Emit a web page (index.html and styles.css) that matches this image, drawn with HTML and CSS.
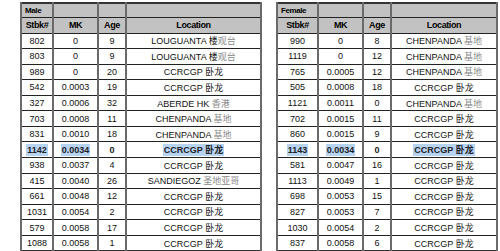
FILE: index.html
```html
<!DOCTYPE html>
<html lang="en">
<head>
    <meta charset="UTF-8">
    <title>Studbook MK</title>
    <link rel="stylesheet" href="styles.css">
</head>
<body>
    <div class="page">
        <table class="mk-table left">
            <colgroup>
                <col class="c-stbk-l"><col class="c-mk"><col class="c-age"><col>
            </colgroup>
            <tr class="group-row"><th class="group">Male</th><th></th><th></th><th></th></tr>
            <tr class="head-row"><th>Stbk#</th><th>MK</th><th>Age</th><th>Location</th></tr>
            <tr><td>802</td><td>0</td><td>9</td><td>LOUGUANTA 楼<span class="zh">观台</span></td></tr>
            <tr><td>803</td><td>0</td><td>9</td><td>LOUGUANTA 楼<span class="zh">观台</span></td></tr>
            <tr><td>989</td><td>0</td><td>20</td><td>CCRCGP 卧龙</td></tr>
            <tr><td>542</td><td>0.0003</td><td>19</td><td>CCRCGP 卧龙</td></tr>
            <tr><td>327</td><td>0.0006</td><td>32</td><td>ABERDE HK <span class="zh">香港</span></td></tr>
            <tr><td>703</td><td>0.0008</td><td>11</td><td>CHENPANDA <span class="zh">基地</span></td></tr>
            <tr><td>831</td><td>0.0010</td><td>18</td><td>CHENPANDA <span class="zh">基地</span></td></tr>
            <tr class="picked"><td><span class="sel">1142</span></td><td><span class="sel">0.0034</span></td><td>0</td><td><span class="sel">CCRCGP 卧龙</span></td></tr>
            <tr><td>938</td><td>0.0037</td><td>4</td><td>CCRCGP 卧龙</td></tr>
            <tr><td>415</td><td>0.0040</td><td>26</td><td>SANDIEGOZ <span class="zh">圣地亚哥</span></td></tr>
            <tr><td>661</td><td>0.0048</td><td>12</td><td>CCRCGP 卧龙</td></tr>
            <tr><td>1031</td><td>0.0054</td><td>2</td><td>CCRCGP 卧龙</td></tr>
            <tr><td>579</td><td>0.0058</td><td>17</td><td>CCRCGP 卧龙</td></tr>
            <tr><td>1088</td><td>0.0058</td><td>1</td><td>CCRCGP 卧龙</td></tr>
        </table>

        <table class="mk-table right">
            <colgroup>
                <col class="c-stbk-r"><col class="c-mk"><col class="c-age"><col>
            </colgroup>
            <tr class="group-row"><th class="group">Female</th><th></th><th></th><th></th></tr>
            <tr class="head-row"><th>Stbk#</th><th>MK</th><th>Age</th><th>Location</th></tr>
            <tr><td>990</td><td>0</td><td>8</td><td>CHENPANDA <span class="zh">基地</span></td></tr>
            <tr><td>1119</td><td>0</td><td>12</td><td>CHENPANDA <span class="zh">基地</span></td></tr>
            <tr><td>765</td><td>0.0005</td><td>12</td><td>CHENPANDA <span class="zh">基地</span></td></tr>
            <tr><td>505</td><td>0.0008</td><td>18</td><td>CCRCGP 卧龙</td></tr>
            <tr><td>1121</td><td>0.0011</td><td>0</td><td>CHENPANDA <span class="zh">基地</span></td></tr>
            <tr><td>702</td><td>0.0015</td><td>11</td><td>CCRCGP 卧龙</td></tr>
            <tr><td>860</td><td>0.0015</td><td>9</td><td>CCRCGP 卧龙</td></tr>
            <tr class="picked"><td><span class="sel">1143</span></td><td><span class="sel">0.0034</span></td><td>0</td><td><span class="sel">CCRCGP 卧龙</span></td></tr>
            <tr><td>581</td><td>0.0047</td><td>16</td><td>CCRCGP 卧龙</td></tr>
            <tr><td>1113</td><td>0.0049</td><td>1</td><td>CCRCGP 卧龙</td></tr>
            <tr><td>698</td><td>0.0053</td><td>15</td><td>CCRCGP 卧龙</td></tr>
            <tr><td>827</td><td>0.0053</td><td>7</td><td>CCRCGP 卧龙</td></tr>
            <tr><td>1030</td><td>0.0054</td><td>2</td><td>CCRCGP 卧龙</td></tr>
            <tr><td>837</td><td>0.0058</td><td>6</td><td>CCRCGP 卧龙</td></tr>
        </table>
    </div>
</body>
</html>
```

FILE: styles.css
```css
body {
    margin: 0;
    background: #fff;
    font-family: "Liberation Sans", Arial, "Noto Sans CJK SC", sans-serif;
    color: #111;
}

.page {
    display: flex;
    align-items: flex-start;
    gap: 14px;
    padding: 2px 0 0 20px;
}

.mk-table {
    border-collapse: collapse;
    table-layout: fixed;
    border: 2px solid #333;
}

.mk-table.left {
    width: 242px;
}

.mk-table.right {
    width: 222px;
}

.c-stbk-l {
    width: 32px;
}

.c-stbk-r {
    width: 41px;
}

.c-mk {
    width: 45px;
}

.c-age {
    width: 28px;
}

.mk-table th,
.mk-table td {
    padding: 0;
    text-align: center;
    white-space: nowrap;
    overflow: hidden;
    border-top: 1px solid #222;
    border-bottom: 1px solid #222;
    border-left: 2px solid #6a6a6a;
    border-right: 2px solid #6a6a6a;
}

.mk-table th {
    background: #c2c2c2;
    font-size: 9px;
    font-weight: bold;
    letter-spacing: -0.4px;
    color: #000;
}

.group-row {
    height: 14px;
}

.head-row {
    height: 16px;
}

.mk-table th.group {
    text-align: left;
    padding-left: 3px;
    font-size: 8px;
}

.mk-table td {
    font-size: 9px;
    height: 14.57px;
}

.zh {
    color: #8a8a8a;
}

.picked td {
    font-weight: bold;
    color: #222;
}

.sel {
    background: #b6d3f2;
    padding: 1px 1px;
}
```
